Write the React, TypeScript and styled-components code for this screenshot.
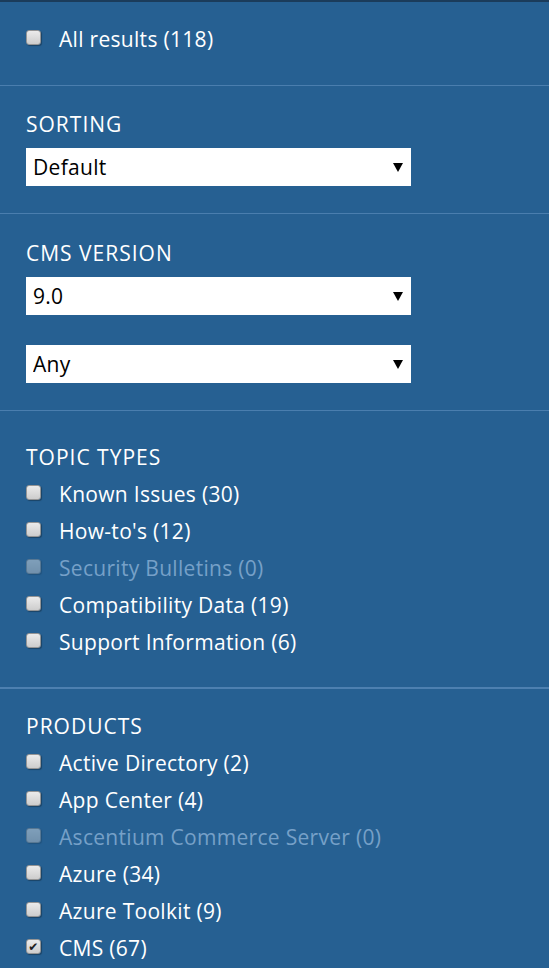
import React, { useState } from "react";
import styled, { createGlobalStyle } from "styled-components";

const GlobalStyle = createGlobalStyle`
  html, body {
    margin: 0;
    padding: 0;
    background: #266092;
  }
  body {
    font-family: "Open Sans", "Noto Sans", sans-serif;
  }
`;

const Panel = styled.div`
  width: 549px;
  background: #266092;
  border-top: 2px solid #1b3c5b;
  color: #ffffff;
`;

interface SectionProps {
  $top: number;
  $bottom: number;
  $thick?: boolean;
  $last?: boolean;
}

const Section = styled.section<SectionProps>`
  display: flex;
  flex-direction: column;
  padding: ${({ $top, $bottom }) => `${$top}px 26px ${$bottom}px`};
  border-bottom: ${({ $thick, $last }) =>
    $last ? "none" : $thick ? "2px solid #4d80b0" : "1px solid #4a7eae"};
`;

const Heading = styled.h3`
  margin: 0;
  font-size: 21px;
  font-weight: 400;
  line-height: 26px;
  letter-spacing: 1px;
  text-transform: uppercase;
`;

const SelectGroup = styled.div`
  display: flex;
  flex-direction: column;
  gap: 30px;
  margin-top: 11px;
`;

const SelectWrap = styled.div`
  position: relative;
  width: 385px;
  height: 38px;
`;

const Select = styled.select`
  appearance: none;
  width: 100%;
  height: 100%;
  margin: 0;
  padding: 0 30px 0 7px;
  border: none;
  border-radius: 0;
  background: #ffffff;
  color: #000000;
  font-family: "Open Sans", "Noto Sans", sans-serif;
  font-size: 21px;
  letter-spacing: 0.3px;
  outline: none;
`;

const Arrow = styled.svg`
  position: absolute;
  right: 8px;
  top: 15px;
  width: 10px;
  height: 9px;
  pointer-events: none;
`;

const List = styled.ul<{ $gap?: number }>`
  list-style: none;
  margin: ${({ $gap = 6 }) => `${$gap}px 0 0`};
  padding: 0;
`;

const Row = styled.li<{ $disabled?: boolean }>`
  display: flex;
  align-items: flex-start;
  gap: 18px;
  height: 37px;
  font-size: 21px;
  line-height: 37px;
  letter-spacing: 0.3px;
  white-space: nowrap;
  color: ${({ $disabled }) => ($disabled ? "#76a0c8" : "#ffffff")};
  cursor: ${({ $disabled }) => ($disabled ? "default" : "pointer")};
`;

const Box = styled.span<{ $disabled?: boolean }>`
  display: flex;
  align-items: center;
  justify-content: center;
  flex: none;
  box-sizing: border-box;
  width: 15px;
  height: 15px;
  margin-top: 9px;
  border: 1px solid #959595;
  border-radius: 3px;
  background: linear-gradient(#ebebeb, #cdcdcd);
  box-shadow: 1px 1px 1px rgba(0, 0, 0, 0.3);
  opacity: ${({ $disabled }) => ($disabled ? 0.45 : 1)};
  color: #1e1e1e;
  font-family: "DejaVu Sans", sans-serif;
  font-size: 12px;
  line-height: 1;
`;

interface Option {
  label: string;
  count: number;
  checked?: boolean;
}

const CheckItem = ({ label, count, checked }: Option) => {
  const [on, setOn] = useState(!!checked);
  const disabled = count === 0;
  return (
    <Row $disabled={disabled} onClick={() => !disabled && setOn(!on)}>
      <Box $disabled={disabled}>{on ? "✔" : ""}</Box>
      <span>
        {label} ({count})
      </span>
    </Row>
  );
};

const Dropdown = ({ value, options }: { value: string; options: string[] }) => (
  <SelectWrap>
    <Select defaultValue={value}>
      {options.map((o) => (
        <option key={o}>{o}</option>
      ))}
    </Select>
    <Arrow viewBox="0 0 10 9">
      <path d="M0 0 H10 L5 9 Z" fill="#000" />
    </Arrow>
  </SelectWrap>
);

const topicTypes: Option[] = [
  { label: "Known Issues", count: 30 },
  { label: "How-to's", count: 12 },
  { label: "Security Bulletins", count: 0 },
  { label: "Compatibility Data", count: 19 },
  { label: "Support Information", count: 6 },
];

const products: Option[] = [
  { label: "Active Directory", count: 2 },
  { label: "App Center", count: 4 },
  { label: "Ascentium Commerce Server", count: 0 },
  { label: "Azure", count: 34 },
  { label: "Azure Toolkit", count: 9 },
  { label: "CMS", count: 67, checked: true },
];

export default function App() {
  return (
    <>
      <GlobalStyle />
      <Panel>
        <Section $top={19} $bottom={27}>
          <List $gap={0}>
            <CheckItem label="All results" count={118} />
          </List>
        </Section>

        <Section $top={25} $bottom={27}>
          <Heading>Sorting</Heading>
          <SelectGroup>
            <Dropdown value="Default" options={["Default", "Newest", "Oldest", "Title"]} />
          </SelectGroup>
        </Section>

        <Section $top={26} $bottom={27}>
          <Heading>CMS Version</Heading>
          <SelectGroup>
            <Dropdown value="9.0" options={["Any", "10.0", "9.0", "8.2", "8.1"]} />
            <Dropdown value="Any" options={["Any", "Initial release", "Update-1", "Update-2"]} />
          </SelectGroup>
        </Section>

        <Section $top={33} $bottom={26} $thick>
          <Heading>Topic types</Heading>
          <List>
            {topicTypes.map((t) => (
              <CheckItem key={t.label} {...t} />
            ))}
          </List>
        </Section>

        <Section $top={24} $bottom={2} $last>
          <Heading>Products</Heading>
          <List>
            {products.map((p) => (
              <CheckItem key={p.label} {...p} />
            ))}
          </List>
        </Section>
      </Panel>
    </>
  );
}
